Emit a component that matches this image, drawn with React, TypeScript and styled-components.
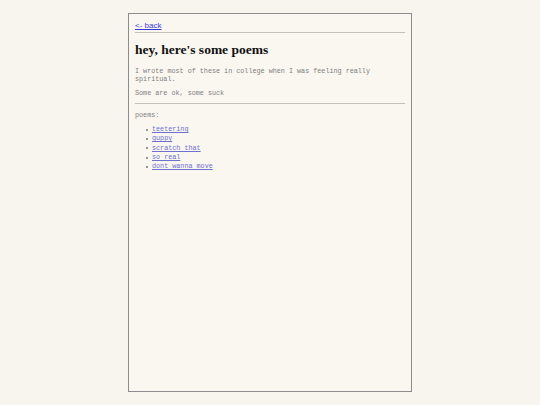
import React from "react";
import styled, { createGlobalStyle } from "styled-components";

const Global = createGlobalStyle`
  html, body {
    margin: 0;
    padding: 0;
    background: #f8f5ee;
  }
`;

const Page = styled.div`
  padding-top: 13px;
  display: flex;
  justify-content: center;
`;

const Frame = styled.div`
  box-sizing: border-box;
  width: 284px;
  height: 379px;
  border: 1px solid #8c8c8c;
  background: #f9f7f0;
  padding: 7px 6px;
`;

const BackLink = styled.a`
  display: block;
  font-family: "Liberation Sans", Arial, sans-serif;
  font-size: 8px;
  line-height: 10px;
  color: #3a3ad8;
  text-decoration: underline;
`;

const Rule = styled.hr<{ $top: number; $bottom: number }>`
  border: none;
  border-top: 1px solid #c4c2bc;
  margin: ${({ $top }) => $top}px 0 ${({ $bottom }) => $bottom}px;
`;

const Title = styled.h1`
  font-family: "Liberation Serif", "Times New Roman", serif;
  font-weight: bold;
  font-size: 13.5px;
  line-height: 16px;
  color: #111;
  margin: 0 0 10px;
`;

const Text = styled.p<{ $gap?: number }>`
  font-family: "Liberation Mono", "Courier New", monospace;
  font-size: 6.75px;
  line-height: 7.5px;
  color: #808080;
  margin: 0 0 ${({ $gap }) => $gap ?? 7}px;
`;

const List = styled.ul`
  margin: 0;
  padding-left: 11px;
  list-style: none;
  font-family: "Liberation Mono", "Courier New", monospace;
  font-size: 6.75px;
  line-height: 9.3px;
`;

const Item = styled.li`
  display: flex;
  align-items: center;
  gap: 4px;

  &::before {
    content: "";
    width: 2px;
    height: 2px;
    border-radius: 50%;
    background: #777;
  }
`;

const PoemLink = styled.a`
  color: #6f6fd0;
  text-decoration: underline;
`;

const poems = ["teetering", "guppy", "scratch that", "so real", "dont wanna move"];

export default function App() {
  return (
    <>
      <Global />
      <Page>
        <Frame>
          <BackLink href="#">&lt;- back</BackLink>
          <Rule $top={1} $bottom={9} />
          <Title>hey, here's some poems</Title>
          <Text>
            I wrote most of these in college when I was feeling really spiritual.
          </Text>
          <Text $gap={5}>Some are ok, some suck</Text>
          <Rule $top={0} $bottom={8} />
          <Text $gap={6}>poems:</Text>
          <List>
            {poems.map((p) => (
              <Item key={p}>
                <PoemLink href="#">{p}</PoemLink>
              </Item>
            ))}
          </List>
        </Frame>
      </Page>
    </>
  );
}
